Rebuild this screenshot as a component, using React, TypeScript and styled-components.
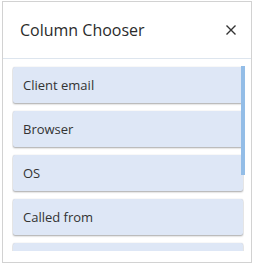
import styled, { createGlobalStyle } from "styled-components";

const columns = ["Client email", "Browser", "OS", "Called from", "Status", "Duration"];

const GlobalStyle = createGlobalStyle`
  html, body {
    margin: 0;
    padding: 0;
    background: #ffffff;
    font-family: "Open Sans", "Noto Sans", sans-serif;
  }
`;

const App = () => {
  return (
    <>
      <GlobalStyle />
      <Panel>
        <Header>
          <Title>Column Chooser</Title>
          <CloseButton aria-label="Close">
            <svg width="10" height="10" viewBox="0 0 10 10">
              <path d="M0.5 0.5 L9.5 9.5 M9.5 0.5 L0.5 9.5" stroke="#333" strokeWidth="1.4" />
            </svg>
          </CloseButton>
        </Header>
        <Body>
          <ScrollArea>
            <ScrollContent>
              {columns.map((c) => (
                <ColumnItem key={c}>{c}</ColumnItem>
              ))}
            </ScrollContent>
            <Thumb />
          </ScrollArea>
        </Body>
      </Panel>
    </>
  );
};

const Panel = styled.div`
  margin: 1px 0 0 2px;
  width: 250px;
  height: 262px;
  box-sizing: border-box;
  border: 1px solid #d2d2d2;
  background: #fff;
  display: flex;
  flex-direction: column;
`;

const Header = styled.div`
  height: 57px;
  box-sizing: border-box;
  border-bottom: 1px solid #dde5ee;
  padding: 0 15px 0 17px;
  display: flex;
  align-items: center;
  justify-content: space-between;
`;

const Title = styled.h2`
  margin: 0;
  font-size: 16px;
  font-weight: 400;
  color: #2b2b2b;
`;

const CloseButton = styled.button`
  border: 0;
  background: none;
  padding: 0;
  width: 10px;
  height: 10px;
  display: flex;
  cursor: pointer;
`;

const Body = styled.div`
  flex: 1;
  padding: 7px 7px 11px 9px;
`;

const ScrollArea = styled.div`
  position: relative;
  height: 185px;
`;

const ScrollContent = styled.div`
  height: 100%;
  overflow: hidden;
  padding: 1px;
  box-sizing: border-box;
  display: flex;
  flex-direction: column;
  gap: 8px;
`;

const ColumnItem = styled.div`
  flex: none;
  height: 36px;
  box-sizing: border-box;
  padding: 0 10px;
  display: flex;
  align-items: center;
  background: #dee7f6;
  border-radius: 2px;
  box-shadow: 0 1px 2px rgba(0, 0, 0, 0.35), 0 0 1px rgba(0, 0, 0, 0.15);
  font-size: 13px;
  color: #333;
`;

const Thumb = styled.div`
  position: absolute;
  top: 0;
  right: -1px;
  width: 4px;
  height: 109px;
  background: #93bde7;
`;

export default App;
